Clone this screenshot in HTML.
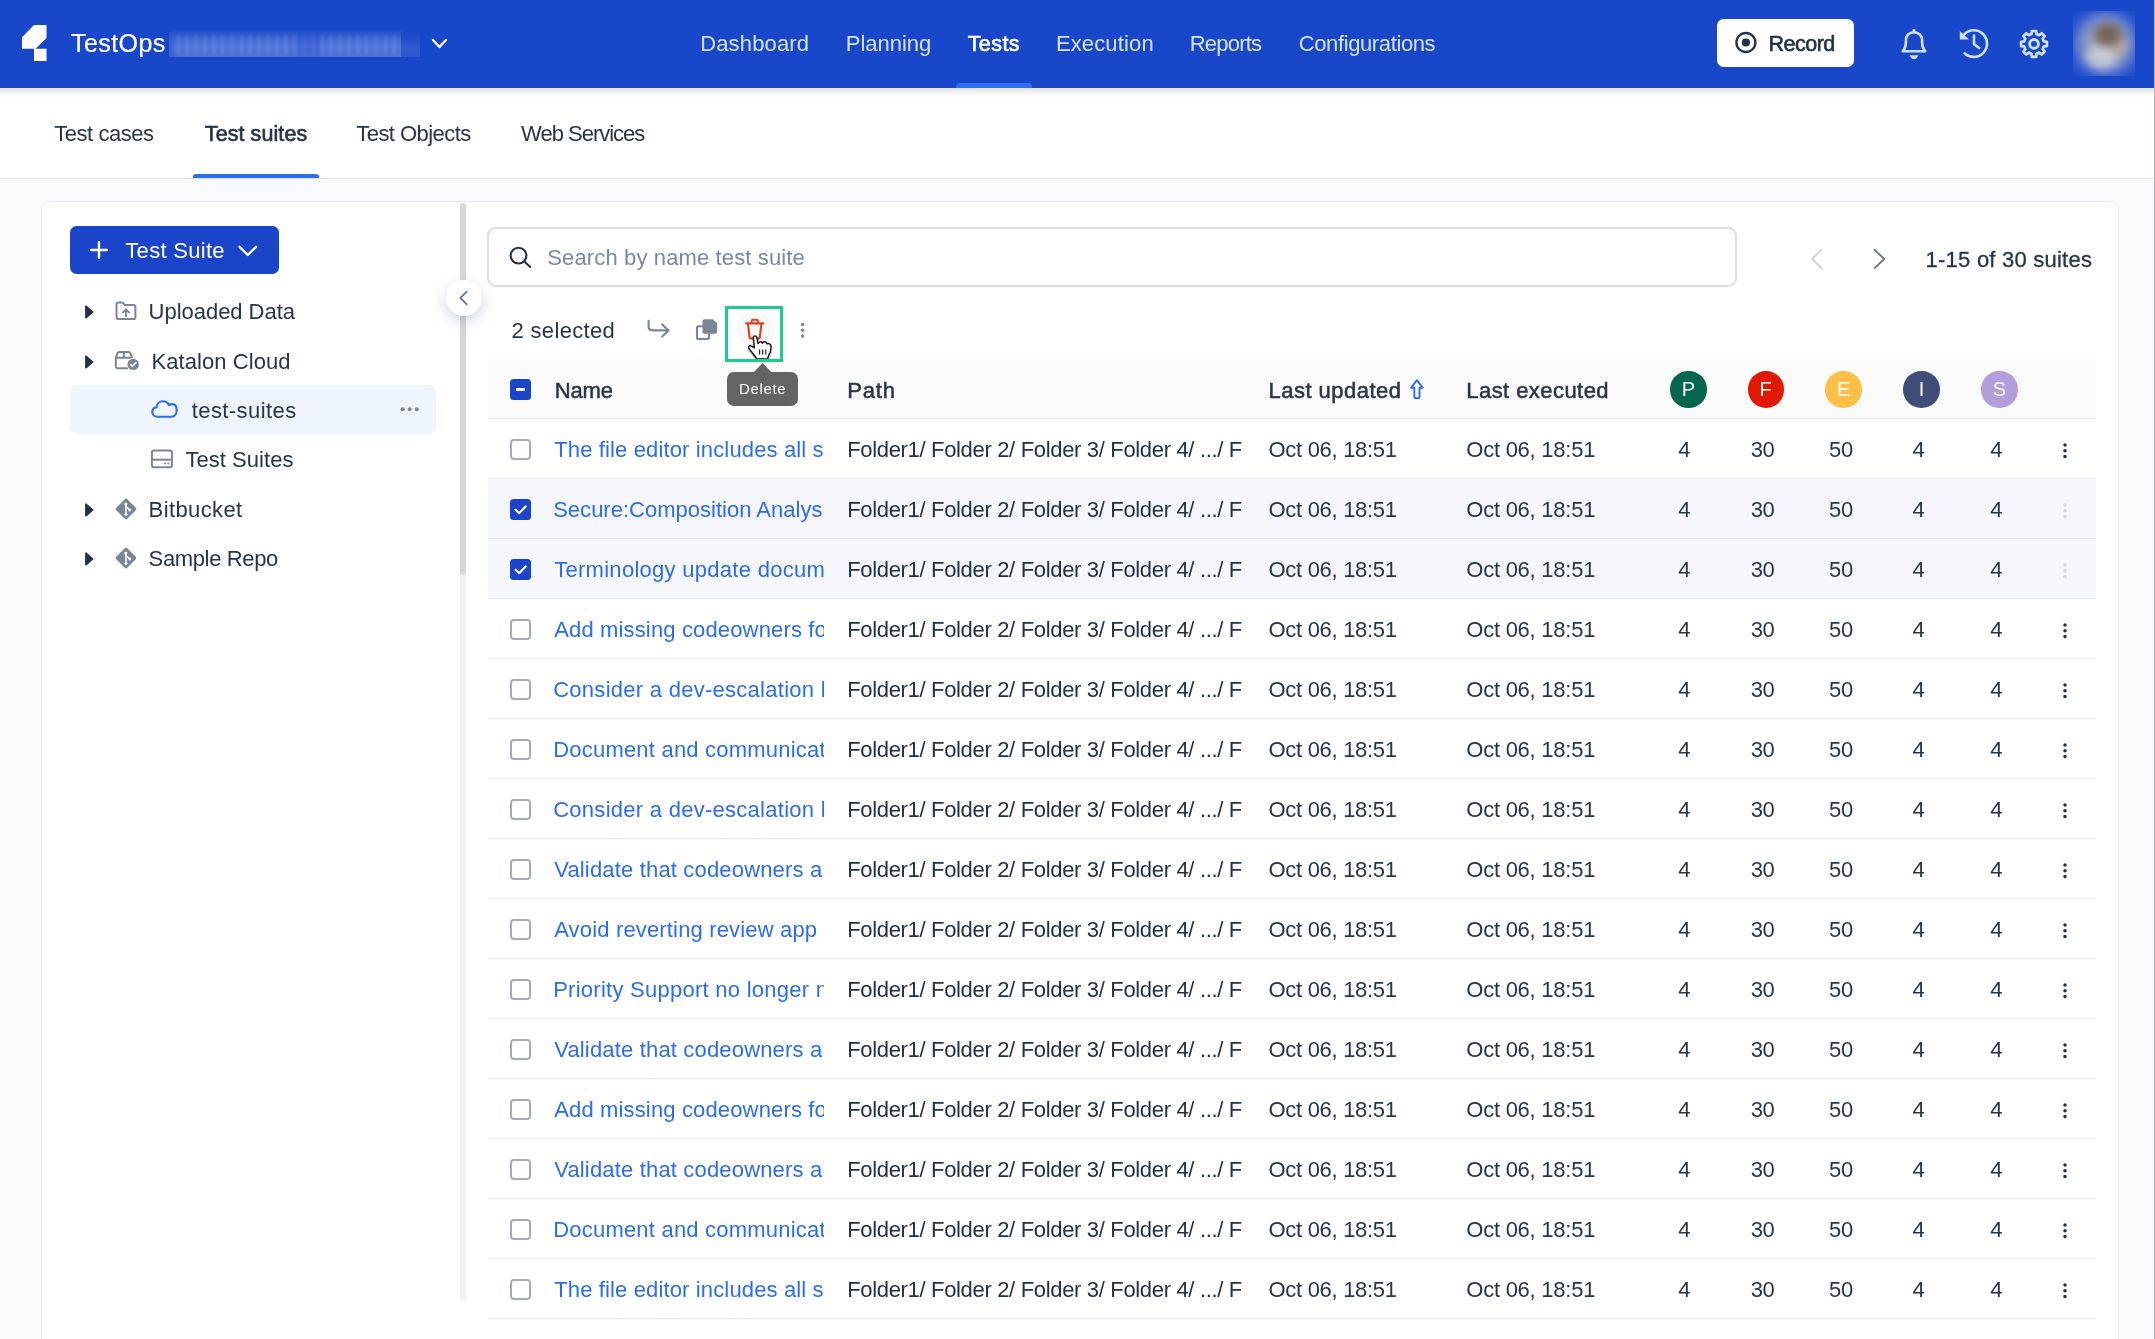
<!DOCTYPE html>
<html><head><meta charset="utf-8"><title>TestOps - Test suites</title>
<style>
html,body{margin:0;padding:0;overflow:hidden}
html{width:2155px;height:1339px}
body{width:2155px;height:1339px;overflow:hidden;position:relative;background:#f9fafd;font-family:"Liberation Sans",sans-serif;color:#233145}
.t{position:absolute;white-space:nowrap;}
.a{position:absolute}
svg{position:absolute;overflow:visible}
.cb{position:absolute;left:510px;width:17px;height:17px;border:2px solid #a6aaba;border-radius:4px;background:#fff}
.cbc{position:absolute;left:510px;width:21px;height:21px;border-radius:3.5px;background:#1a44cb}
.rl{position:absolute;left:488px;width:1608px;height:1px;background:#ebecef;box-shadow:0 1px 0 rgba(235,236,239,.35)}
.circ{position:absolute;height:36.6px;border-radius:50%;top:371px;color:#fff;font-size:20px;line-height:37.6px;text-align:center}
#w{position:absolute;left:0;top:0;width:2155px;height:1339px;overflow:hidden;will-change:transform}
</style></head><body><div id="w">
<div class="a" style="left:-30px;top:0;width:2215px;height:88px;background:#1947ca;box-shadow:0 2px 8px rgba(30,40,70,.22)"></div>
<svg style="left:0;top:0" width="60" height="88"><polygon fill="#fff" points="34,25 46.5,25 46.5,37.9 35.6,48.8 46.5,48.8 46.5,61 34,61 34,48.8 22,48.8 22,37.3"/></svg>
<div class="t" style="left:71.00px;top:27.00px;font-size:25px;line-height:32px;color:#fff;letter-spacing:0.43px;-webkit-text-stroke:0.2px #fff;">TestOps</div>
<div class="a" style="left:169px;top:30px;width:232px;height:27px;background:linear-gradient(180deg,rgba(255,255,255,.03) 0%,rgba(255,255,255,.17) 30%,rgba(255,255,255,.27) 58%,rgba(255,255,255,.22) 100%)"></div>
<div class="a" style="left:401px;top:30px;width:18.500px;height:27px;background:linear-gradient(180deg,rgba(255,255,255,0) 0%,rgba(255,255,255,.05) 40%,rgba(255,255,255,.10) 70%,rgba(255,255,255,.09) 100%)"></div>
<div class="a" style="left:176px;top:34px;width:222px;height:21px;background:repeating-linear-gradient(90deg,rgba(255,255,255,.05) 0 4px,rgba(25,71,202,.06) 4px 9px);filter:blur(1px)"></div>
<div class="a" style="left:169px;top:30px;width:250px;height:27px;overflow:hidden"><div class="a" style="left:127px;top:1px;width:24px;height:25px;background:rgba(25,71,202,.30);filter:blur(3px)"></div></div>
<div class="a" style="left:169px;top:30px;width:10px;height:27px;background:linear-gradient(90deg,rgba(25,71,202,.45),rgba(25,71,202,0))"></div>
<svg style="left:430px;top:35px" width="20" height="18"><polyline points="3,5 9.5,12 16,5" fill="none" stroke="#fff" stroke-width="2.4" stroke-linecap="round" stroke-linejoin="round"/></svg>
<div class="t" style="left:700.20px;top:28.70px;font-size:22px;line-height:29px;color:#d3e1fb;letter-spacing:0.15px;">Dashboard</div>
<div class="t" style="left:845.80px;top:28.70px;font-size:22px;line-height:29px;color:#d3e1fb;letter-spacing:-0.03px;">Planning</div>
<div class="t" style="left:967.70px;top:29.70px;font-size:21.5px;line-height:28px;color:#fff;letter-spacing:0.42px;-webkit-text-stroke:0.6px #fff;">Tests</div>
<div class="t" style="left:1055.90px;top:28.70px;font-size:22px;line-height:29px;color:#d3e1fb;letter-spacing:0.14px;">Execution</div>
<div class="t" style="left:1189.70px;top:28.70px;font-size:22px;line-height:29px;color:#d3e1fb;letter-spacing:-0.77px;">Reports</div>
<div class="t" style="left:1298.70px;top:28.70px;font-size:22px;line-height:29px;color:#d3e1fb;letter-spacing:-0.38px;">Configurations</div>
<div class="a" style="left:956px;top:83px;width:76px;height:5px;background:#2b6ff3;border-radius:4px 4px 0 0"></div>
<div class="a" style="left:1717px;top:19px;width:137px;height:48px;background:#fff;border-radius:6.5px"></div>
<svg style="left:1733px;top:30px" width="26" height="26"><circle cx="12.9" cy="12.5" r="9.5" fill="none" stroke="#233145" stroke-width="2.3"/><circle cx="12.9" cy="12.5" r="4.1" fill="#233145"/></svg>
<div class="t" style="left:1768.50px;top:29.80px;font-size:21.5px;line-height:28px;color:#233145;letter-spacing:-0.51px;-webkit-text-stroke:0.6px #233145;">Record</div>
<svg style="left:1896px;top:24px" width="36" height="40" viewBox="1896 24 36 40"><path d="M1914 30.300v1.600" stroke="#cfe0fd" stroke-width="2.800" stroke-linecap="round"/><path d="M1902.700 51.200C1904.900 49.100 1905.700 46.400 1905.900 42.400V40.300C1905.900 35.700 1909.300 32.200 1914 32.200C1918.700 32.200 1922.100 35.700 1922.100 40.300V42.400C1922.300 46.400 1923.100 49.100 1925.300 51.200Z" fill="none" stroke="#cfe0fd" stroke-width="2.600" stroke-linejoin="round"/><path d="M1909.700 55.200H1918.300C1917.700 57.600 1916 59.100 1914 59.100C1912 59.100 1910.300 57.600 1909.700 55.200Z" fill="#cfe0fd"/></svg>
<svg style="left:1956px;top:26px" width="36" height="36" viewBox="1956 26 36 36"><path d="M1964.200 34.300A13.300 13.300 0 1 1 1964.600 53.300" fill="none" stroke="#cfe0fd" stroke-width="2.600" stroke-linecap="round"/><path d="M1959.800 31v8.400h9.200z" fill="#cfe0fd"/><path d="M1974 35.500V44.100L1979.200 48" fill="none" stroke="#cfe0fd" stroke-width="2.600" stroke-linecap="round" stroke-linejoin="round"/></svg>
<svg style="left:2016px;top:26px" width="36" height="36" viewBox="2016 26 36 36"><path d="M2031.49 34.12 L2031.85 30.98 L2036.15 30.98 L2036.51 34.12 L2039.14 35.21 L2041.62 33.24 L2044.66 36.28 L2042.69 38.76 L2043.78 41.39 L2046.92 41.75 L2046.92 46.05 L2043.78 46.41 L2042.69 49.04 L2044.66 51.52 L2041.62 54.56 L2039.14 52.59 L2036.51 53.68 L2036.15 56.82 L2031.85 56.82 L2031.49 53.68 L2028.86 52.59 L2026.38 54.56 L2023.34 51.52 L2025.31 49.04 L2024.22 46.41 L2021.08 46.05 L2021.08 41.75 L2024.22 41.39 L2025.31 38.76 L2023.34 36.28 L2026.38 33.24 L2028.86 35.21Z" fill="none" stroke="#cfe0fd" stroke-width="2.700" stroke-linejoin="round"/><circle cx="2034" cy="43.900" r="4.400" fill="none" stroke="#cfe0fd" stroke-width="2.900"/></svg>
<div class="a" style="left:2073px;top:10.5px;width:62px;height:65.5px;overflow:hidden"><div class="a" style="left:-6px;top:-4px;width:74px;height:74px;background:radial-gradient(ellipse 19px 16px at 55.5% 37%,rgba(108,94,82,1) 0,rgba(124,108,96,.9) 50%,rgba(140,125,115,0) 100%),radial-gradient(ellipse 12px 14px at 70% 52%,rgba(184,168,158,.95) 0,rgba(180,166,160,.6) 55%,rgba(180,170,170,0) 100%),radial-gradient(ellipse 21px 16px at 47% 67%,rgba(202,204,210,1) 0,rgba(198,202,214,.8) 50%,rgba(190,196,220,0) 100%),radial-gradient(circle at 52% 50%,rgba(170,168,172,1) 0,rgba(160,165,190,.95) 30%,rgba(125,145,210,.8) 50%,rgba(70,105,210,.5) 66%,rgba(25,71,202,0) 84%);filter:blur(2.5px)"></div></div>
<div class="a" style="left:2153.600px;top:0;width:1.400px;height:1339px;background:#b9aeb0;z-index:5"></div>
<div class="a" style="left:0;top:88px;width:2155px;height:90px;background:#fff;border-bottom:1.5px solid #dde1ec;z-index:-1"></div>
<div class="t" style="left:54.20px;top:118.60px;font-size:22px;line-height:29px;color:#2a3547;letter-spacing:-0.45px;">Test cases</div>
<div class="t" style="left:204.80px;top:119.60px;font-size:21.5px;line-height:28px;color:#233145;letter-spacing:0.08px;-webkit-text-stroke:0.6px #233145;">Test suites</div>
<div class="t" style="left:356.30px;top:118.60px;font-size:22px;line-height:29px;color:#2a3547;letter-spacing:-0.56px;">Test Objects</div>
<div class="t" style="left:521.10px;top:118.60px;font-size:22px;line-height:29px;color:#2a3547;letter-spacing:-1.01px;">Web Services</div>
<div class="a" style="left:192.500px;top:173.500px;width:126.500px;height:4.500px;background:#2b6cf0;border-radius:3px 3px 0 0"></div>
<div class="a" style="left:41px;top:201px;width:2076px;height:1160px;background:#fff;border:1px solid #e7ebf4;border-radius:8px"></div>
<div class="a" style="left:460.300px;top:203px;width:6px;height:1097px;background:#f0f1f3;border-radius:3px 3px 0 0"></div>
<div class="a" style="left:460.300px;top:203px;width:6px;height:372px;background:#d8d8d8;border-radius:3px"></div>
<div class="a" style="left:445.500px;top:280px;width:36px;height:36px;border-radius:50%;background:#fff;box-shadow:0 5px 16px rgba(50,70,120,.24)"></div>
<svg style="left:453.800px;top:288px" width="20" height="20"><polyline points="12.8,3.6 6.4,10 12.8,16.4" fill="none" stroke="#6b7789" stroke-width="1.8" stroke-linecap="round" stroke-linejoin="round"/></svg>
<div class="a" style="left:70.300px;top:226px;width:208.700px;height:48px;background:#1a45c9;border-radius:6.500px"></div>
<svg style="left:89px;top:240px" width="20" height="20"><path d="M10 2.200v15.600M2.200 10h15.600" stroke="#fff" stroke-width="2.4" stroke-linecap="round"/></svg>
<div class="t" style="left:125.30px;top:236.40px;font-size:22px;line-height:29px;color:#fff;letter-spacing:0.3px;">Test Suite</div>
<svg style="left:237px;top:242px" width="22" height="18"><polyline points="2.600,4.800 10.800,13 19,4.800" fill="none" stroke="#fff" stroke-width="2.4" stroke-linecap="round" stroke-linejoin="round"/></svg>
<svg style="left:83px;top:303.7px" width="14" height="16"><path d="M2.900 2.200v11.600l6.800-5.800z" fill="#233145" stroke="#233145" stroke-width="1.600" stroke-linejoin="round"/></svg>
<svg style="left:83px;top:353.6px" width="14" height="16"><path d="M2.900 2.200v11.600l6.800-5.800z" fill="#233145" stroke="#233145" stroke-width="1.600" stroke-linejoin="round"/></svg>
<svg style="left:83px;top:501.8px" width="14" height="16"><path d="M2.900 2.200v11.600l6.800-5.800z" fill="#233145" stroke="#233145" stroke-width="1.600" stroke-linejoin="round"/></svg>
<svg style="left:83px;top:551.4px" width="14" height="16"><path d="M2.900 2.200v11.600l6.800-5.800z" fill="#233145" stroke="#233145" stroke-width="1.600" stroke-linejoin="round"/></svg>
<svg style="left:114px;top:299px" width="24" height="24" viewBox="0 0 24 24"><path d="M2.500 5.200c0-1 .8-1.800 1.800-1.800h4.200l2.300 2.700h8.800c1 0 1.800.8 1.800 1.800v10.300c0 1-.8 1.800-1.800 1.800H4.300c-1 0-1.800-.8-1.800-1.800z" fill="none" stroke="#7a8696" stroke-width="2" stroke-linejoin="round"/><path d="M12 17v-6.200M9 13.400l3-3 3 3" fill="none" stroke="#7a8696" stroke-width="2" stroke-linecap="round" stroke-linejoin="round"/></svg>
<div class="t" style="left:148.60px;top:297.00px;font-size:22px;line-height:29px;color:#27354a;letter-spacing:-0.03px;">Uploaded Data</div>
<svg style="left:113px;top:349px" width="28" height="24" viewBox="0 0 28 24"><path d="M14.500 19.200H4.600c-1 0-1.800-.8-1.800-1.800V8.800l1.700-4.600c.3-.7.9-1.100 1.600-1.100h9.600c.7 0 1.400.5 1.600 1.100L19 8.800v1.400" fill="none" stroke="#7a8696" stroke-width="2" stroke-linejoin="round" stroke-linecap="round"/><path d="M2.800 8.800H19M10.900 3.200v5.600" fill="none" stroke="#7a8696" stroke-width="2"/><circle cx="20.200" cy="15.400" r="6.400" fill="#fff"/><circle cx="20.200" cy="15.400" r="5.700" fill="#7a8696"/><polyline points="17.600,15.500 19.500,17.300 22.900,13.700" fill="none" stroke="#fff" stroke-width="1.600" stroke-linecap="round" stroke-linejoin="round"/></svg>
<div class="t" style="left:151.40px;top:346.70px;font-size:22px;line-height:29px;color:#27354a;letter-spacing:0.08px;">Katalon Cloud</div>
<div class="a" style="left:70.300px;top:385px;width:366px;height:49.300px;background:#eff5fe;border-radius:8px"></div>
<svg style="left:148px;top:396px" width="34" height="26" viewBox="148 396 34 26"><path d="M157.200 416.700C154.400 416.700 152.300 414.600 152.300 412C152.300 409.600 154 407.700 156.400 407.400C156.800 404 159.500 401.300 162.900 401.300C165.600 401.300 167.900 402.900 168.900 405.200C169.800 404.500 170.900 404.100 172.100 404.100C175.200 404.100 176.700 406.800 176.700 410.200C176.700 413.800 174.600 416.700 171.600 416.700Z" fill="none" stroke="#2b6cf0" stroke-width="2.100" stroke-linejoin="round"/></svg>
<div class="t" style="left:191.70px;top:395.60px;font-size:22px;line-height:29px;color:#27354a;letter-spacing:0.42px;">test-suites</div>
<svg style="left:398px;top:404px" width="24" height="10"><circle cx="4.700" cy="5.300" r="2" fill="#7a8696"/><circle cx="11.700" cy="5.300" r="2" fill="#7a8696"/><circle cx="18.700" cy="5.300" r="2" fill="#7a8696"/></svg>
<svg style="left:149px;top:447px" width="26" height="24" viewBox="0 0 26 24"><rect x="2.900" y="3.500" width="20" height="16.800" rx="2" fill="none" stroke="#7a8696" stroke-width="2"/><path d="M2.900 12.700h20" stroke="#7a8696" stroke-width="2"/><circle cx="16.300" cy="16.600" r="1" fill="#7a8696"/><circle cx="19.400" cy="16.600" r="1" fill="#7a8696"/></svg>
<div class="t" style="left:185.50px;top:445.40px;font-size:22px;line-height:29px;color:#27354a;letter-spacing:0.03px;">Test Suites</div>
<svg style="left:113px;top:496.8px" width="26" height="24" viewBox="0 0 26 24"><rect x="5.200" y="4.200" width="15.600" height="15.600" rx="1.800" transform="rotate(45 13 12)" fill="#7a8696"/><path d="M13 6.500v11M13 9.200l3.600 3.600" stroke="#fff" stroke-width="1.500" fill="none"/><circle cx="13" cy="17.200" r="1.500" fill="#fff"/><circle cx="16.800" cy="13" r="1.500" fill="#fff"/><circle cx="12.800" cy="7" r="1.500" fill="#fff"/></svg>
<div class="t" style="left:148.60px;top:494.70px;font-size:22px;line-height:29px;color:#27354a;letter-spacing:0.38px;">Bitbucket</div>
<svg style="left:113px;top:546.4px" width="26" height="24" viewBox="0 0 26 24"><rect x="5.200" y="4.200" width="15.600" height="15.600" rx="1.800" transform="rotate(45 13 12)" fill="#7a8696"/><path d="M13 6.500v11M13 9.200l3.600 3.600" stroke="#fff" stroke-width="1.500" fill="none"/><circle cx="13" cy="17.200" r="1.500" fill="#fff"/><circle cx="16.800" cy="13" r="1.500" fill="#fff"/><circle cx="12.800" cy="7" r="1.500" fill="#fff"/></svg>
<div class="t" style="left:148.60px;top:544.30px;font-size:22px;line-height:29px;color:#27354a;letter-spacing:-0.36px;">Sample Repo</div>
<div class="a" style="left:487px;top:227px;width:1246px;height:56px;border:2px solid #dadde3;border-radius:9px;background:#fff"></div>
<svg style="left:506px;top:244px" width="30" height="28"><circle cx="12.500" cy="11.600" r="7.900" fill="none" stroke="#233145" stroke-width="2.100"/><path d="M18.300 17.400l6 5.600" stroke="#233145" stroke-width="2.100" stroke-linecap="round"/></svg>
<div class="t" style="left:547.30px;top:242.90px;font-size:22px;line-height:29px;color:#7c899d;letter-spacing:0.13px;">Search by name test suite</div>
<svg style="left:1806px;top:246px" width="24" height="26"><polyline points="15.600,3.800 6,13 15.600,22.200" fill="none" stroke="#cdcdcd" stroke-width="1.800" stroke-linecap="round" stroke-linejoin="round"/></svg>
<svg style="left:1868px;top:246px" width="24" height="26"><polyline points="6.500,3.800 16.400,13 6.500,22.200" fill="none" stroke="#6b7789" stroke-width="1.800" stroke-linecap="round" stroke-linejoin="round"/></svg>
<div class="t" style="left:1925.60px;top:245.20px;font-size:22px;line-height:29px;color:#27354a;letter-spacing:0.23px;-webkit-text-stroke:0.3px #27354a;">1-15 of 30 suites</div>
<div class="a" style="left:487.500px;top:359px;width:1608px;height:59.500px;background:#fafafb"></div>
<div class="t" style="left:511.50px;top:315.60px;font-size:22px;line-height:29px;color:#27354a;letter-spacing:0.34px;">2 selected</div>
<svg style="left:645px;top:317px" width="28" height="24"><path d="M3.600 3.800v5.800c0 2.300 1.600 3.800 3.800 3.800h15.600" fill="none" stroke="#7a8696" stroke-width="2.100" stroke-linecap="round" stroke-linejoin="round"/><polyline points="17.200,7.400 23.400,13.400 17.200,19.400" fill="none" stroke="#7a8696" stroke-width="2.100" stroke-linecap="round" stroke-linejoin="round"/></svg>
<svg style="left:694px;top:317px" width="26" height="24"><path d="M10.500 2.200h8.400l4.200 4v8.600c0 1.100-.9 2-2 2h-10.600c-1.100 0-2-.9-2-2V4.200c0-1.100.9-2 2-2z" fill="#7a8696"/><path d="M8.600 9.200H4.800c-1 0-1.800.8-1.800 1.800v9.200c0 1 .8 1.800 1.800 1.800h8.400c1 0 1.800-.8 1.800-1.800v-3" fill="none" stroke="#7a8696" stroke-width="2.100" stroke-linejoin="round" stroke-linecap="round"/></svg>
<div class="a" style="left:725px;top:306px;width:58px;height:56px;background:#fff"></div>
<div class="a" style="left:736.300px;top:311.200px;width:36px;height:36px;border-radius:50%;background:#f9f9fa"></div>
<svg style="left:743px;top:316px" width="24" height="26"><path d="M3.200 7.400h17" stroke="#d9431e" stroke-width="2.100" stroke-linecap="round"/><path d="M8 6.800l1.300-3h5l1.300 3" fill="none" stroke="#d9431e" stroke-width="2.100" stroke-linejoin="round"/><path d="M5 7.600l1.500 13.200c.1 1 .9 1.700 1.900 1.700h6.600c1 0 1.800-.7 1.900-1.700l1.500-13.200" fill="none" stroke="#d9431e" stroke-width="2.100" stroke-linejoin="round"/></svg>
<svg style="left:745px;top:333px;filter:drop-shadow(0 1px 1.200px rgba(0,0,0,.35))" width="30" height="30" viewBox="745 333 30 30"><path d="M753.400 338.200C753.200 336.400 754.200 335.900 754.900 335.900C756.200 335.900 756.800 336.600 756.900 337.800L758.100 343.600C758.600 341.600 761.600 341 762.400 343.300C763.200 341.200 766.400 341.200 767 343.800C768.200 343.200 770.800 343.600 770.900 346C771.200 349.500 770.600 352.500 768.600 355.500L767.600 359H757L749.200 348.800C748 347.300 749.200 345.200 751 345.900L754.400 347.800Z" fill="#fff" stroke="#111" stroke-width="1.400" stroke-linejoin="round"/><path d="M759.600 349.400v5.200M762.700 349.400v5.200M765.800 349.400v5.200" stroke="#222" stroke-width="1.200"/></svg>
<div class="a" style="left:725px;top:306px;width:52px;height:50px;border:3px solid #1bcb8f"></div>
<svg style="left:797px;top:320px" width="12" height="22"><circle cx="5.600" cy="4.500" r="1.800" fill="#7a8696"/><circle cx="5.600" cy="10.300" r="1.800" fill="#7a8696"/><circle cx="5.600" cy="16.100" r="1.800" fill="#7a8696"/></svg>
<div class="rl" style="top:418px;background:#e8e8e9"></div>
<div class="cbc" style="top:379px"></div><div class="a" style="left:515.800px;top:388px;width:9.400px;height:2.800px;background:#fff;border-radius:1px"></div>
<div class="t" style="left:554.70px;top:376.00px;font-size:22px;line-height:29px;color:#27354a;letter-spacing:-0.15px;-webkit-text-stroke:0.5px #27354a;">Name</div>
<div class="t" style="left:847.20px;top:376.00px;font-size:22px;line-height:29px;color:#27354a;letter-spacing:0.86px;-webkit-text-stroke:0.5px #27354a;">Path</div>
<div class="t" style="left:1268.50px;top:376.00px;font-size:22px;line-height:29px;color:#27354a;letter-spacing:0.48px;-webkit-text-stroke:0.5px #27354a;">Last updated</div>
<svg style="left:1407px;top:378px" width="20" height="24"><path d="M9.900 2.200l5.900 7.600h-3.300v8.800c0 .9-.7 1.600-1.600 1.600h-2c-.9 0-1.600-.7-1.600-1.600v-8.800H4z" fill="none" stroke="#2b6cf0" stroke-width="1.900" stroke-linejoin="round"/></svg>
<div class="t" style="left:1466.30px;top:376.00px;font-size:22px;line-height:29px;color:#27354a;letter-spacing:0.44px;-webkit-text-stroke:0.5px #27354a;">Last executed</div>
<div class="circ" style="left:1669.5px;width:37.8px;background:#04664c">P</div>
<div class="circ" style="left:1747.8px;width:35.8px;background:#e11900">F</div>
<div class="circ" style="left:1825.3px;width:36.6px;background:#ffbf47">E</div>
<div class="circ" style="left:1903.2px;width:36.5px;background:#404d78">I</div>
<div class="circ" style="left:1981.4px;width:36.2px;background:#b49ddb">S</div>
<div class="a" style="left:727.300px;top:371.600px;width:70.700px;height:34.200px;background:#646464;border-radius:7px"></div>
<svg style="left:752px;top:362px" width="22" height="11"><polygon points="1.800,10.200 10.600,1 19.400,10.200" fill="#646464"/></svg>
<div class="t" style="left:738.90px;top:378.70px;font-size:15px;line-height:20px;color:#fff;letter-spacing:0.68px;">Delete</div>
<div class="rl" style="top:478.0px"></div>
<div class="cb" style="top:438.7px"></div>
<div class="t" style="left:554.20px;top:435.10px;font-size:22px;line-height:29px;color:#2b6cf0;letter-spacing:0.14px;width:269.8px;overflow:hidden;">The file editor includes all s</div>
<div class="t" style="left:847.20px;top:435.10px;font-size:22px;line-height:29px;color:#233145;letter-spacing:-0.33px;width:395.6px;overflow:hidden;">Folder1/ Folder 2/ Folder 3/ Folder 4/ .../ Folder 5</div>
<div class="t" style="left:1268.50px;top:435.10px;font-size:22px;line-height:29px;color:#27354a;letter-spacing:-0.3px;">Oct 06, 18:51</div>
<div class="t" style="left:1466.30px;top:435.10px;font-size:22px;line-height:29px;color:#27354a;letter-spacing:-0.25px;">Oct 06, 18:51</div>
<div class="t" style="left:1654.30px;top:435.10px;font-size:22px;line-height:29px;color:#27354a;letter-spacing:-0.3px;width:60px;text-align:center;">4</div>
<div class="t" style="left:1732.60px;top:435.10px;font-size:22px;line-height:29px;color:#27354a;letter-spacing:-0.3px;width:60px;text-align:center;">30</div>
<div class="t" style="left:1811.00px;top:435.10px;font-size:22px;line-height:29px;color:#27354a;letter-spacing:-0.3px;width:60px;text-align:center;">50</div>
<div class="t" style="left:1888.40px;top:435.10px;font-size:22px;line-height:29px;color:#27354a;letter-spacing:-0.3px;width:60px;text-align:center;">4</div>
<div class="t" style="left:1966.20px;top:435.10px;font-size:22px;line-height:29px;color:#27354a;letter-spacing:-0.3px;width:60px;text-align:center;">4</div>
<svg style="left:2059px;top:439.7px" width="12" height="22"><circle cx="6" cy="5" r="1.750" fill="#233145"/><circle cx="6" cy="10.800" r="1.750" fill="#233145"/><circle cx="6" cy="16.600" r="1.750" fill="#233145"/></svg>
<div class="a" style="left:487.500px;top:479.0px;width:1608px;height:59px;background:#f6f7fc"></div>
<div class="rl" style="top:538.0px;background:#e6e7eb"></div>
<div class="cbc" style="top:498.7px"></div><svg style="left:510px;top:498.7px" width="21" height="21"><polyline points="5.600,10.800 9.200,14.200 15.600,7.400" fill="none" stroke="#fff" stroke-width="2.200" stroke-linecap="round" stroke-linejoin="round"/></svg>
<div class="t" style="left:553.20px;top:495.10px;font-size:22px;line-height:29px;color:#2b6cf0;letter-spacing:0.01px;width:270.8px;overflow:hidden;">Secure:Composition Analys</div>
<div class="t" style="left:847.20px;top:495.10px;font-size:22px;line-height:29px;color:#233145;letter-spacing:-0.33px;width:395.6px;overflow:hidden;">Folder1/ Folder 2/ Folder 3/ Folder 4/ .../ Folder 5</div>
<div class="t" style="left:1268.50px;top:495.10px;font-size:22px;line-height:29px;color:#27354a;letter-spacing:-0.3px;">Oct 06, 18:51</div>
<div class="t" style="left:1466.30px;top:495.10px;font-size:22px;line-height:29px;color:#27354a;letter-spacing:-0.25px;">Oct 06, 18:51</div>
<div class="t" style="left:1654.30px;top:495.10px;font-size:22px;line-height:29px;color:#27354a;letter-spacing:-0.3px;width:60px;text-align:center;">4</div>
<div class="t" style="left:1732.60px;top:495.10px;font-size:22px;line-height:29px;color:#27354a;letter-spacing:-0.3px;width:60px;text-align:center;">30</div>
<div class="t" style="left:1811.00px;top:495.10px;font-size:22px;line-height:29px;color:#27354a;letter-spacing:-0.3px;width:60px;text-align:center;">50</div>
<div class="t" style="left:1888.40px;top:495.10px;font-size:22px;line-height:29px;color:#27354a;letter-spacing:-0.3px;width:60px;text-align:center;">4</div>
<div class="t" style="left:1966.20px;top:495.10px;font-size:22px;line-height:29px;color:#27354a;letter-spacing:-0.3px;width:60px;text-align:center;">4</div>
<svg style="left:2059px;top:499.7px" width="12" height="22"><circle cx="6" cy="5" r="1.750" fill="#d4d6dc"/><circle cx="6" cy="10.800" r="1.750" fill="#d4d6dc"/><circle cx="6" cy="16.600" r="1.750" fill="#d4d6dc"/></svg>
<div class="a" style="left:487.500px;top:539.0px;width:1608px;height:59px;background:#f6f7fc"></div>
<div class="rl" style="top:598.0px;background:#e6e7eb"></div>
<div class="cbc" style="top:558.7px"></div><svg style="left:510px;top:558.7px" width="21" height="21"><polyline points="5.600,10.800 9.200,14.200 15.600,7.400" fill="none" stroke="#fff" stroke-width="2.200" stroke-linecap="round" stroke-linejoin="round"/></svg>
<div class="t" style="left:554.20px;top:555.10px;font-size:22px;line-height:29px;color:#2b6cf0;letter-spacing:0.28px;width:269.8px;overflow:hidden;">Terminology update docum</div>
<div class="t" style="left:847.20px;top:555.10px;font-size:22px;line-height:29px;color:#233145;letter-spacing:-0.33px;width:395.6px;overflow:hidden;">Folder1/ Folder 2/ Folder 3/ Folder 4/ .../ Folder 5</div>
<div class="t" style="left:1268.50px;top:555.10px;font-size:22px;line-height:29px;color:#27354a;letter-spacing:-0.3px;">Oct 06, 18:51</div>
<div class="t" style="left:1466.30px;top:555.10px;font-size:22px;line-height:29px;color:#27354a;letter-spacing:-0.25px;">Oct 06, 18:51</div>
<div class="t" style="left:1654.30px;top:555.10px;font-size:22px;line-height:29px;color:#27354a;letter-spacing:-0.3px;width:60px;text-align:center;">4</div>
<div class="t" style="left:1732.60px;top:555.10px;font-size:22px;line-height:29px;color:#27354a;letter-spacing:-0.3px;width:60px;text-align:center;">30</div>
<div class="t" style="left:1811.00px;top:555.10px;font-size:22px;line-height:29px;color:#27354a;letter-spacing:-0.3px;width:60px;text-align:center;">50</div>
<div class="t" style="left:1888.40px;top:555.10px;font-size:22px;line-height:29px;color:#27354a;letter-spacing:-0.3px;width:60px;text-align:center;">4</div>
<div class="t" style="left:1966.20px;top:555.10px;font-size:22px;line-height:29px;color:#27354a;letter-spacing:-0.3px;width:60px;text-align:center;">4</div>
<svg style="left:2059px;top:559.7px" width="12" height="22"><circle cx="6" cy="5" r="1.750" fill="#d4d6dc"/><circle cx="6" cy="10.800" r="1.750" fill="#d4d6dc"/><circle cx="6" cy="16.600" r="1.750" fill="#d4d6dc"/></svg>
<div class="rl" style="top:658.0px"></div>
<div class="cb" style="top:618.7px"></div>
<div class="t" style="left:554.20px;top:615.10px;font-size:22px;line-height:29px;color:#2b6cf0;letter-spacing:0.15px;width:269.8px;overflow:hidden;">Add missing codeowners for</div>
<div class="t" style="left:847.20px;top:615.10px;font-size:22px;line-height:29px;color:#233145;letter-spacing:-0.33px;width:395.6px;overflow:hidden;">Folder1/ Folder 2/ Folder 3/ Folder 4/ .../ Folder 5</div>
<div class="t" style="left:1268.50px;top:615.10px;font-size:22px;line-height:29px;color:#27354a;letter-spacing:-0.3px;">Oct 06, 18:51</div>
<div class="t" style="left:1466.30px;top:615.10px;font-size:22px;line-height:29px;color:#27354a;letter-spacing:-0.25px;">Oct 06, 18:51</div>
<div class="t" style="left:1654.30px;top:615.10px;font-size:22px;line-height:29px;color:#27354a;letter-spacing:-0.3px;width:60px;text-align:center;">4</div>
<div class="t" style="left:1732.60px;top:615.10px;font-size:22px;line-height:29px;color:#27354a;letter-spacing:-0.3px;width:60px;text-align:center;">30</div>
<div class="t" style="left:1811.00px;top:615.10px;font-size:22px;line-height:29px;color:#27354a;letter-spacing:-0.3px;width:60px;text-align:center;">50</div>
<div class="t" style="left:1888.40px;top:615.10px;font-size:22px;line-height:29px;color:#27354a;letter-spacing:-0.3px;width:60px;text-align:center;">4</div>
<div class="t" style="left:1966.20px;top:615.10px;font-size:22px;line-height:29px;color:#27354a;letter-spacing:-0.3px;width:60px;text-align:center;">4</div>
<svg style="left:2059px;top:619.7px" width="12" height="22"><circle cx="6" cy="5" r="1.750" fill="#233145"/><circle cx="6" cy="10.800" r="1.750" fill="#233145"/><circle cx="6" cy="16.600" r="1.750" fill="#233145"/></svg>
<div class="rl" style="top:718.0px"></div>
<div class="cb" style="top:678.7px"></div>
<div class="t" style="left:553.20px;top:675.10px;font-size:22px;line-height:29px;color:#2b6cf0;letter-spacing:0.27px;width:270.8px;overflow:hidden;">Consider a dev-escalation label</div>
<div class="t" style="left:847.20px;top:675.10px;font-size:22px;line-height:29px;color:#233145;letter-spacing:-0.33px;width:395.6px;overflow:hidden;">Folder1/ Folder 2/ Folder 3/ Folder 4/ .../ Folder 5</div>
<div class="t" style="left:1268.50px;top:675.10px;font-size:22px;line-height:29px;color:#27354a;letter-spacing:-0.3px;">Oct 06, 18:51</div>
<div class="t" style="left:1466.30px;top:675.10px;font-size:22px;line-height:29px;color:#27354a;letter-spacing:-0.25px;">Oct 06, 18:51</div>
<div class="t" style="left:1654.30px;top:675.10px;font-size:22px;line-height:29px;color:#27354a;letter-spacing:-0.3px;width:60px;text-align:center;">4</div>
<div class="t" style="left:1732.60px;top:675.10px;font-size:22px;line-height:29px;color:#27354a;letter-spacing:-0.3px;width:60px;text-align:center;">30</div>
<div class="t" style="left:1811.00px;top:675.10px;font-size:22px;line-height:29px;color:#27354a;letter-spacing:-0.3px;width:60px;text-align:center;">50</div>
<div class="t" style="left:1888.40px;top:675.10px;font-size:22px;line-height:29px;color:#27354a;letter-spacing:-0.3px;width:60px;text-align:center;">4</div>
<div class="t" style="left:1966.20px;top:675.10px;font-size:22px;line-height:29px;color:#27354a;letter-spacing:-0.3px;width:60px;text-align:center;">4</div>
<svg style="left:2059px;top:679.7px" width="12" height="22"><circle cx="6" cy="5" r="1.750" fill="#233145"/><circle cx="6" cy="10.800" r="1.750" fill="#233145"/><circle cx="6" cy="16.600" r="1.750" fill="#233145"/></svg>
<div class="rl" style="top:778.0px"></div>
<div class="cb" style="top:738.7px"></div>
<div class="t" style="left:553.20px;top:735.10px;font-size:22px;line-height:29px;color:#2b6cf0;letter-spacing:0.21px;width:270.8px;overflow:hidden;">Document and communicate</div>
<div class="t" style="left:847.20px;top:735.10px;font-size:22px;line-height:29px;color:#233145;letter-spacing:-0.33px;width:395.6px;overflow:hidden;">Folder1/ Folder 2/ Folder 3/ Folder 4/ .../ Folder 5</div>
<div class="t" style="left:1268.50px;top:735.10px;font-size:22px;line-height:29px;color:#27354a;letter-spacing:-0.3px;">Oct 06, 18:51</div>
<div class="t" style="left:1466.30px;top:735.10px;font-size:22px;line-height:29px;color:#27354a;letter-spacing:-0.25px;">Oct 06, 18:51</div>
<div class="t" style="left:1654.30px;top:735.10px;font-size:22px;line-height:29px;color:#27354a;letter-spacing:-0.3px;width:60px;text-align:center;">4</div>
<div class="t" style="left:1732.60px;top:735.10px;font-size:22px;line-height:29px;color:#27354a;letter-spacing:-0.3px;width:60px;text-align:center;">30</div>
<div class="t" style="left:1811.00px;top:735.10px;font-size:22px;line-height:29px;color:#27354a;letter-spacing:-0.3px;width:60px;text-align:center;">50</div>
<div class="t" style="left:1888.40px;top:735.10px;font-size:22px;line-height:29px;color:#27354a;letter-spacing:-0.3px;width:60px;text-align:center;">4</div>
<div class="t" style="left:1966.20px;top:735.10px;font-size:22px;line-height:29px;color:#27354a;letter-spacing:-0.3px;width:60px;text-align:center;">4</div>
<svg style="left:2059px;top:739.7px" width="12" height="22"><circle cx="6" cy="5" r="1.750" fill="#233145"/><circle cx="6" cy="10.800" r="1.750" fill="#233145"/><circle cx="6" cy="16.600" r="1.750" fill="#233145"/></svg>
<div class="rl" style="top:838.0px"></div>
<div class="cb" style="top:798.7px"></div>
<div class="t" style="left:553.20px;top:795.10px;font-size:22px;line-height:29px;color:#2b6cf0;letter-spacing:0.27px;width:270.8px;overflow:hidden;">Consider a dev-escalation label</div>
<div class="t" style="left:847.20px;top:795.10px;font-size:22px;line-height:29px;color:#233145;letter-spacing:-0.33px;width:395.6px;overflow:hidden;">Folder1/ Folder 2/ Folder 3/ Folder 4/ .../ Folder 5</div>
<div class="t" style="left:1268.50px;top:795.10px;font-size:22px;line-height:29px;color:#27354a;letter-spacing:-0.3px;">Oct 06, 18:51</div>
<div class="t" style="left:1466.30px;top:795.10px;font-size:22px;line-height:29px;color:#27354a;letter-spacing:-0.25px;">Oct 06, 18:51</div>
<div class="t" style="left:1654.30px;top:795.10px;font-size:22px;line-height:29px;color:#27354a;letter-spacing:-0.3px;width:60px;text-align:center;">4</div>
<div class="t" style="left:1732.60px;top:795.10px;font-size:22px;line-height:29px;color:#27354a;letter-spacing:-0.3px;width:60px;text-align:center;">30</div>
<div class="t" style="left:1811.00px;top:795.10px;font-size:22px;line-height:29px;color:#27354a;letter-spacing:-0.3px;width:60px;text-align:center;">50</div>
<div class="t" style="left:1888.40px;top:795.10px;font-size:22px;line-height:29px;color:#27354a;letter-spacing:-0.3px;width:60px;text-align:center;">4</div>
<div class="t" style="left:1966.20px;top:795.10px;font-size:22px;line-height:29px;color:#27354a;letter-spacing:-0.3px;width:60px;text-align:center;">4</div>
<svg style="left:2059px;top:799.7px" width="12" height="22"><circle cx="6" cy="5" r="1.750" fill="#233145"/><circle cx="6" cy="10.800" r="1.750" fill="#233145"/><circle cx="6" cy="16.600" r="1.750" fill="#233145"/></svg>
<div class="rl" style="top:898.0px"></div>
<div class="cb" style="top:858.7px"></div>
<div class="t" style="left:554.20px;top:855.10px;font-size:22px;line-height:29px;color:#2b6cf0;letter-spacing:0.17px;width:269.8px;overflow:hidden;">Validate that codeowners a</div>
<div class="t" style="left:847.20px;top:855.10px;font-size:22px;line-height:29px;color:#233145;letter-spacing:-0.33px;width:395.6px;overflow:hidden;">Folder1/ Folder 2/ Folder 3/ Folder 4/ .../ Folder 5</div>
<div class="t" style="left:1268.50px;top:855.10px;font-size:22px;line-height:29px;color:#27354a;letter-spacing:-0.3px;">Oct 06, 18:51</div>
<div class="t" style="left:1466.30px;top:855.10px;font-size:22px;line-height:29px;color:#27354a;letter-spacing:-0.25px;">Oct 06, 18:51</div>
<div class="t" style="left:1654.30px;top:855.10px;font-size:22px;line-height:29px;color:#27354a;letter-spacing:-0.3px;width:60px;text-align:center;">4</div>
<div class="t" style="left:1732.60px;top:855.10px;font-size:22px;line-height:29px;color:#27354a;letter-spacing:-0.3px;width:60px;text-align:center;">30</div>
<div class="t" style="left:1811.00px;top:855.10px;font-size:22px;line-height:29px;color:#27354a;letter-spacing:-0.3px;width:60px;text-align:center;">50</div>
<div class="t" style="left:1888.40px;top:855.10px;font-size:22px;line-height:29px;color:#27354a;letter-spacing:-0.3px;width:60px;text-align:center;">4</div>
<div class="t" style="left:1966.20px;top:855.10px;font-size:22px;line-height:29px;color:#27354a;letter-spacing:-0.3px;width:60px;text-align:center;">4</div>
<svg style="left:2059px;top:859.7px" width="12" height="22"><circle cx="6" cy="5" r="1.750" fill="#233145"/><circle cx="6" cy="10.800" r="1.750" fill="#233145"/><circle cx="6" cy="16.600" r="1.750" fill="#233145"/></svg>
<div class="rl" style="top:958.0px"></div>
<div class="cb" style="top:918.7px"></div>
<div class="t" style="left:554.20px;top:915.10px;font-size:22px;line-height:29px;color:#2b6cf0;letter-spacing:0.16px;width:269.8px;overflow:hidden;">Avoid reverting review app</div>
<div class="t" style="left:847.20px;top:915.10px;font-size:22px;line-height:29px;color:#233145;letter-spacing:-0.33px;width:395.6px;overflow:hidden;">Folder1/ Folder 2/ Folder 3/ Folder 4/ .../ Folder 5</div>
<div class="t" style="left:1268.50px;top:915.10px;font-size:22px;line-height:29px;color:#27354a;letter-spacing:-0.3px;">Oct 06, 18:51</div>
<div class="t" style="left:1466.30px;top:915.10px;font-size:22px;line-height:29px;color:#27354a;letter-spacing:-0.25px;">Oct 06, 18:51</div>
<div class="t" style="left:1654.30px;top:915.10px;font-size:22px;line-height:29px;color:#27354a;letter-spacing:-0.3px;width:60px;text-align:center;">4</div>
<div class="t" style="left:1732.60px;top:915.10px;font-size:22px;line-height:29px;color:#27354a;letter-spacing:-0.3px;width:60px;text-align:center;">30</div>
<div class="t" style="left:1811.00px;top:915.10px;font-size:22px;line-height:29px;color:#27354a;letter-spacing:-0.3px;width:60px;text-align:center;">50</div>
<div class="t" style="left:1888.40px;top:915.10px;font-size:22px;line-height:29px;color:#27354a;letter-spacing:-0.3px;width:60px;text-align:center;">4</div>
<div class="t" style="left:1966.20px;top:915.10px;font-size:22px;line-height:29px;color:#27354a;letter-spacing:-0.3px;width:60px;text-align:center;">4</div>
<svg style="left:2059px;top:919.7px" width="12" height="22"><circle cx="6" cy="5" r="1.750" fill="#233145"/><circle cx="6" cy="10.800" r="1.750" fill="#233145"/><circle cx="6" cy="16.600" r="1.750" fill="#233145"/></svg>
<div class="rl" style="top:1018.0px"></div>
<div class="cb" style="top:978.7px"></div>
<div class="t" style="left:553.20px;top:975.10px;font-size:22px;line-height:29px;color:#2b6cf0;letter-spacing:0.26px;width:270.8px;overflow:hidden;">Priority Support no longer needed</div>
<div class="t" style="left:847.20px;top:975.10px;font-size:22px;line-height:29px;color:#233145;letter-spacing:-0.33px;width:395.6px;overflow:hidden;">Folder1/ Folder 2/ Folder 3/ Folder 4/ .../ Folder 5</div>
<div class="t" style="left:1268.50px;top:975.10px;font-size:22px;line-height:29px;color:#27354a;letter-spacing:-0.3px;">Oct 06, 18:51</div>
<div class="t" style="left:1466.30px;top:975.10px;font-size:22px;line-height:29px;color:#27354a;letter-spacing:-0.25px;">Oct 06, 18:51</div>
<div class="t" style="left:1654.30px;top:975.10px;font-size:22px;line-height:29px;color:#27354a;letter-spacing:-0.3px;width:60px;text-align:center;">4</div>
<div class="t" style="left:1732.60px;top:975.10px;font-size:22px;line-height:29px;color:#27354a;letter-spacing:-0.3px;width:60px;text-align:center;">30</div>
<div class="t" style="left:1811.00px;top:975.10px;font-size:22px;line-height:29px;color:#27354a;letter-spacing:-0.3px;width:60px;text-align:center;">50</div>
<div class="t" style="left:1888.40px;top:975.10px;font-size:22px;line-height:29px;color:#27354a;letter-spacing:-0.3px;width:60px;text-align:center;">4</div>
<div class="t" style="left:1966.20px;top:975.10px;font-size:22px;line-height:29px;color:#27354a;letter-spacing:-0.3px;width:60px;text-align:center;">4</div>
<svg style="left:2059px;top:979.7px" width="12" height="22"><circle cx="6" cy="5" r="1.750" fill="#233145"/><circle cx="6" cy="10.800" r="1.750" fill="#233145"/><circle cx="6" cy="16.600" r="1.750" fill="#233145"/></svg>
<div class="rl" style="top:1078.0px"></div>
<div class="cb" style="top:1038.7px"></div>
<div class="t" style="left:554.20px;top:1035.10px;font-size:22px;line-height:29px;color:#2b6cf0;letter-spacing:0.17px;width:269.8px;overflow:hidden;">Validate that codeowners a</div>
<div class="t" style="left:847.20px;top:1035.10px;font-size:22px;line-height:29px;color:#233145;letter-spacing:-0.33px;width:395.6px;overflow:hidden;">Folder1/ Folder 2/ Folder 3/ Folder 4/ .../ Folder 5</div>
<div class="t" style="left:1268.50px;top:1035.10px;font-size:22px;line-height:29px;color:#27354a;letter-spacing:-0.3px;">Oct 06, 18:51</div>
<div class="t" style="left:1466.30px;top:1035.10px;font-size:22px;line-height:29px;color:#27354a;letter-spacing:-0.25px;">Oct 06, 18:51</div>
<div class="t" style="left:1654.30px;top:1035.10px;font-size:22px;line-height:29px;color:#27354a;letter-spacing:-0.3px;width:60px;text-align:center;">4</div>
<div class="t" style="left:1732.60px;top:1035.10px;font-size:22px;line-height:29px;color:#27354a;letter-spacing:-0.3px;width:60px;text-align:center;">30</div>
<div class="t" style="left:1811.00px;top:1035.10px;font-size:22px;line-height:29px;color:#27354a;letter-spacing:-0.3px;width:60px;text-align:center;">50</div>
<div class="t" style="left:1888.40px;top:1035.10px;font-size:22px;line-height:29px;color:#27354a;letter-spacing:-0.3px;width:60px;text-align:center;">4</div>
<div class="t" style="left:1966.20px;top:1035.10px;font-size:22px;line-height:29px;color:#27354a;letter-spacing:-0.3px;width:60px;text-align:center;">4</div>
<svg style="left:2059px;top:1039.7px" width="12" height="22"><circle cx="6" cy="5" r="1.750" fill="#233145"/><circle cx="6" cy="10.800" r="1.750" fill="#233145"/><circle cx="6" cy="16.600" r="1.750" fill="#233145"/></svg>
<div class="rl" style="top:1138.0px"></div>
<div class="cb" style="top:1098.7px"></div>
<div class="t" style="left:554.20px;top:1095.10px;font-size:22px;line-height:29px;color:#2b6cf0;letter-spacing:0.15px;width:269.8px;overflow:hidden;">Add missing codeowners for</div>
<div class="t" style="left:847.20px;top:1095.10px;font-size:22px;line-height:29px;color:#233145;letter-spacing:-0.33px;width:395.6px;overflow:hidden;">Folder1/ Folder 2/ Folder 3/ Folder 4/ .../ Folder 5</div>
<div class="t" style="left:1268.50px;top:1095.10px;font-size:22px;line-height:29px;color:#27354a;letter-spacing:-0.3px;">Oct 06, 18:51</div>
<div class="t" style="left:1466.30px;top:1095.10px;font-size:22px;line-height:29px;color:#27354a;letter-spacing:-0.25px;">Oct 06, 18:51</div>
<div class="t" style="left:1654.30px;top:1095.10px;font-size:22px;line-height:29px;color:#27354a;letter-spacing:-0.3px;width:60px;text-align:center;">4</div>
<div class="t" style="left:1732.60px;top:1095.10px;font-size:22px;line-height:29px;color:#27354a;letter-spacing:-0.3px;width:60px;text-align:center;">30</div>
<div class="t" style="left:1811.00px;top:1095.10px;font-size:22px;line-height:29px;color:#27354a;letter-spacing:-0.3px;width:60px;text-align:center;">50</div>
<div class="t" style="left:1888.40px;top:1095.10px;font-size:22px;line-height:29px;color:#27354a;letter-spacing:-0.3px;width:60px;text-align:center;">4</div>
<div class="t" style="left:1966.20px;top:1095.10px;font-size:22px;line-height:29px;color:#27354a;letter-spacing:-0.3px;width:60px;text-align:center;">4</div>
<svg style="left:2059px;top:1099.7px" width="12" height="22"><circle cx="6" cy="5" r="1.750" fill="#233145"/><circle cx="6" cy="10.800" r="1.750" fill="#233145"/><circle cx="6" cy="16.600" r="1.750" fill="#233145"/></svg>
<div class="rl" style="top:1198.0px"></div>
<div class="cb" style="top:1158.7px"></div>
<div class="t" style="left:554.20px;top:1155.10px;font-size:22px;line-height:29px;color:#2b6cf0;letter-spacing:0.17px;width:269.8px;overflow:hidden;">Validate that codeowners a</div>
<div class="t" style="left:847.20px;top:1155.10px;font-size:22px;line-height:29px;color:#233145;letter-spacing:-0.33px;width:395.6px;overflow:hidden;">Folder1/ Folder 2/ Folder 3/ Folder 4/ .../ Folder 5</div>
<div class="t" style="left:1268.50px;top:1155.10px;font-size:22px;line-height:29px;color:#27354a;letter-spacing:-0.3px;">Oct 06, 18:51</div>
<div class="t" style="left:1466.30px;top:1155.10px;font-size:22px;line-height:29px;color:#27354a;letter-spacing:-0.25px;">Oct 06, 18:51</div>
<div class="t" style="left:1654.30px;top:1155.10px;font-size:22px;line-height:29px;color:#27354a;letter-spacing:-0.3px;width:60px;text-align:center;">4</div>
<div class="t" style="left:1732.60px;top:1155.10px;font-size:22px;line-height:29px;color:#27354a;letter-spacing:-0.3px;width:60px;text-align:center;">30</div>
<div class="t" style="left:1811.00px;top:1155.10px;font-size:22px;line-height:29px;color:#27354a;letter-spacing:-0.3px;width:60px;text-align:center;">50</div>
<div class="t" style="left:1888.40px;top:1155.10px;font-size:22px;line-height:29px;color:#27354a;letter-spacing:-0.3px;width:60px;text-align:center;">4</div>
<div class="t" style="left:1966.20px;top:1155.10px;font-size:22px;line-height:29px;color:#27354a;letter-spacing:-0.3px;width:60px;text-align:center;">4</div>
<svg style="left:2059px;top:1159.7px" width="12" height="22"><circle cx="6" cy="5" r="1.750" fill="#233145"/><circle cx="6" cy="10.800" r="1.750" fill="#233145"/><circle cx="6" cy="16.600" r="1.750" fill="#233145"/></svg>
<div class="rl" style="top:1258.0px"></div>
<div class="cb" style="top:1218.7px"></div>
<div class="t" style="left:553.20px;top:1215.10px;font-size:22px;line-height:29px;color:#2b6cf0;letter-spacing:0.21px;width:270.8px;overflow:hidden;">Document and communicate</div>
<div class="t" style="left:847.20px;top:1215.10px;font-size:22px;line-height:29px;color:#233145;letter-spacing:-0.33px;width:395.6px;overflow:hidden;">Folder1/ Folder 2/ Folder 3/ Folder 4/ .../ Folder 5</div>
<div class="t" style="left:1268.50px;top:1215.10px;font-size:22px;line-height:29px;color:#27354a;letter-spacing:-0.3px;">Oct 06, 18:51</div>
<div class="t" style="left:1466.30px;top:1215.10px;font-size:22px;line-height:29px;color:#27354a;letter-spacing:-0.25px;">Oct 06, 18:51</div>
<div class="t" style="left:1654.30px;top:1215.10px;font-size:22px;line-height:29px;color:#27354a;letter-spacing:-0.3px;width:60px;text-align:center;">4</div>
<div class="t" style="left:1732.60px;top:1215.10px;font-size:22px;line-height:29px;color:#27354a;letter-spacing:-0.3px;width:60px;text-align:center;">30</div>
<div class="t" style="left:1811.00px;top:1215.10px;font-size:22px;line-height:29px;color:#27354a;letter-spacing:-0.3px;width:60px;text-align:center;">50</div>
<div class="t" style="left:1888.40px;top:1215.10px;font-size:22px;line-height:29px;color:#27354a;letter-spacing:-0.3px;width:60px;text-align:center;">4</div>
<div class="t" style="left:1966.20px;top:1215.10px;font-size:22px;line-height:29px;color:#27354a;letter-spacing:-0.3px;width:60px;text-align:center;">4</div>
<svg style="left:2059px;top:1219.7px" width="12" height="22"><circle cx="6" cy="5" r="1.750" fill="#233145"/><circle cx="6" cy="10.800" r="1.750" fill="#233145"/><circle cx="6" cy="16.600" r="1.750" fill="#233145"/></svg>
<div class="rl" style="top:1318.0px"></div>
<div class="cb" style="top:1278.7px"></div>
<div class="t" style="left:554.20px;top:1275.10px;font-size:22px;line-height:29px;color:#2b6cf0;letter-spacing:0.14px;width:269.8px;overflow:hidden;">The file editor includes all s</div>
<div class="t" style="left:847.20px;top:1275.10px;font-size:22px;line-height:29px;color:#233145;letter-spacing:-0.33px;width:395.6px;overflow:hidden;">Folder1/ Folder 2/ Folder 3/ Folder 4/ .../ Folder 5</div>
<div class="t" style="left:1268.50px;top:1275.10px;font-size:22px;line-height:29px;color:#27354a;letter-spacing:-0.3px;">Oct 06, 18:51</div>
<div class="t" style="left:1466.30px;top:1275.10px;font-size:22px;line-height:29px;color:#27354a;letter-spacing:-0.25px;">Oct 06, 18:51</div>
<div class="t" style="left:1654.30px;top:1275.10px;font-size:22px;line-height:29px;color:#27354a;letter-spacing:-0.3px;width:60px;text-align:center;">4</div>
<div class="t" style="left:1732.60px;top:1275.10px;font-size:22px;line-height:29px;color:#27354a;letter-spacing:-0.3px;width:60px;text-align:center;">30</div>
<div class="t" style="left:1811.00px;top:1275.10px;font-size:22px;line-height:29px;color:#27354a;letter-spacing:-0.3px;width:60px;text-align:center;">50</div>
<div class="t" style="left:1888.40px;top:1275.10px;font-size:22px;line-height:29px;color:#27354a;letter-spacing:-0.3px;width:60px;text-align:center;">4</div>
<div class="t" style="left:1966.20px;top:1275.10px;font-size:22px;line-height:29px;color:#27354a;letter-spacing:-0.3px;width:60px;text-align:center;">4</div>
<svg style="left:2059px;top:1279.7px" width="12" height="22"><circle cx="6" cy="5" r="1.750" fill="#233145"/><circle cx="6" cy="10.800" r="1.750" fill="#233145"/><circle cx="6" cy="16.600" r="1.750" fill="#233145"/></svg>
</div></body></html>
